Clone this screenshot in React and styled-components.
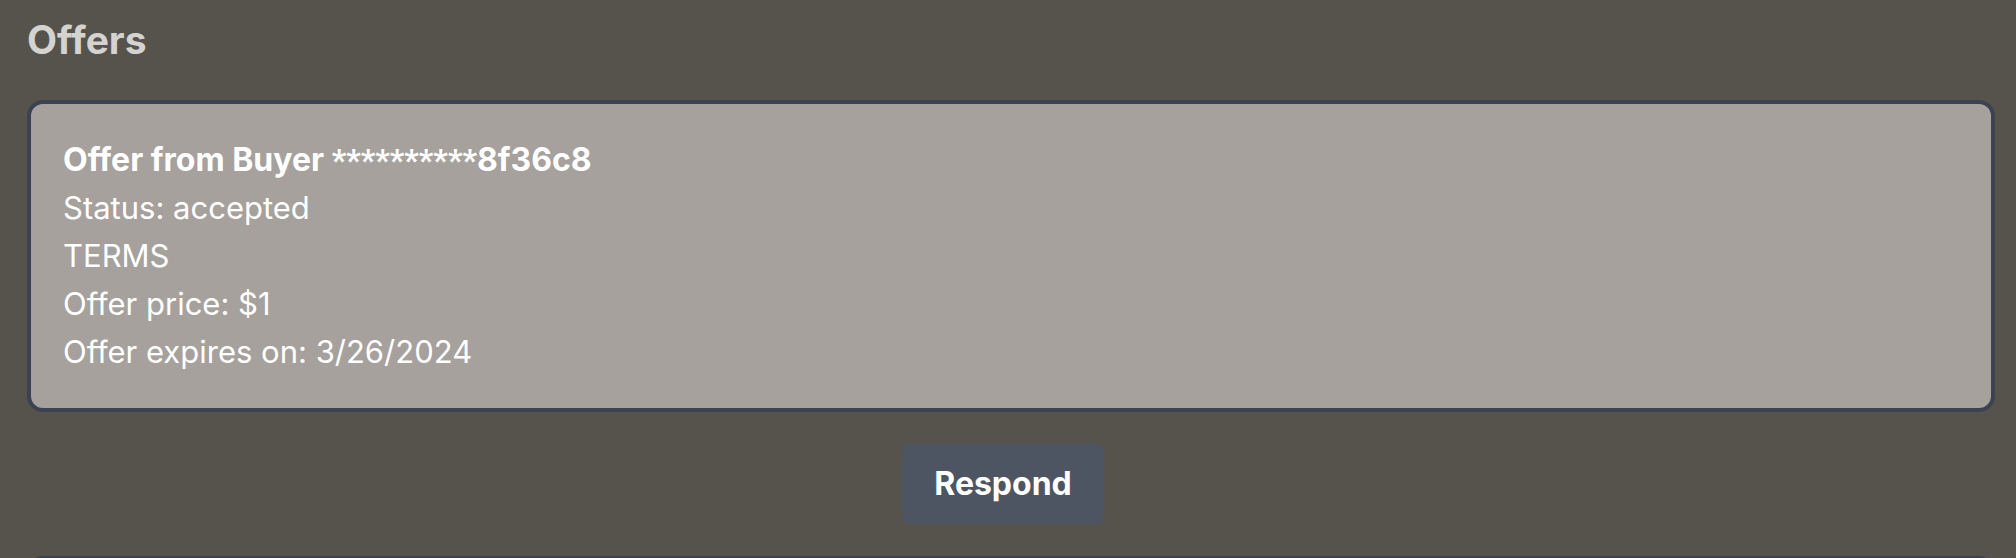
import React from "react";
import styled, { createGlobalStyle } from "styled-components";

const GlobalStyle = createGlobalStyle`
  * { box-sizing: border-box; }
  body {
    margin: 0;
    background: #56524c;
    font-family: Inter, "Liberation Sans", sans-serif;
    font-size: 31px;
    line-height: 48px;
    color: #ffffff;
  }
`;

const Page = styled.main`
  height: 100vh;
  overflow: hidden;
  padding: 12px 21px 0 27px;
`;

const Title = styled.h2`
  margin: 0 0 32px;
  font-size: 39px;
  line-height: 56px;
  font-weight: 700;
  color: #d5d3d0;
`;

const OfferList = styled.div`
  display: flex;
  flex-direction: column;
  gap: 32px;
`;

const Card = styled.article`
  min-height: 72px;
  padding: 32px;
  border: 4px solid #3c4252;
  border-radius: 16px;
  background: #a6a19d;
`;

const CardTitle = styled.h3`
  margin: 0;
  font-size: 32px;
  line-height: 48px;
  font-weight: 700;
`;

const Mask = styled.span`
  font-family: Roboto, sans-serif;
  line-height: 1;
`;

const Line = styled.p`
  margin: 0;
`;

const Actions = styled.div`
  display: flex;
  justify-content: center;
  padding-right: 16px;
`;

const Button = styled.button`
  padding: 16px 32px;
  border: 0;
  border-radius: 8px;
  background: #4e5562;
  color: inherit;
  font-family: inherit;
  font-size: 32px;
  line-height: 48px;
  font-weight: 700;
  cursor: pointer;
`;

export default function App() {
  return (
    <>
      <GlobalStyle />
      <Page>
        <Title>Offers</Title>
        <OfferList>
          <Card>
            <CardTitle>
              Offer from Buyer <Mask>**********</Mask>8f36c8
            </CardTitle>
            <Line>Status: accepted</Line>
            <Line>TERMS</Line>
            <Line>Offer price: $1</Line>
            <Line>Offer expires on: 3/26/2024</Line>
          </Card>
          <Actions>
            <Button type="button">Respond</Button>
          </Actions>
          <Card />
        </OfferList>
      </Page>
    </>
  );
}
